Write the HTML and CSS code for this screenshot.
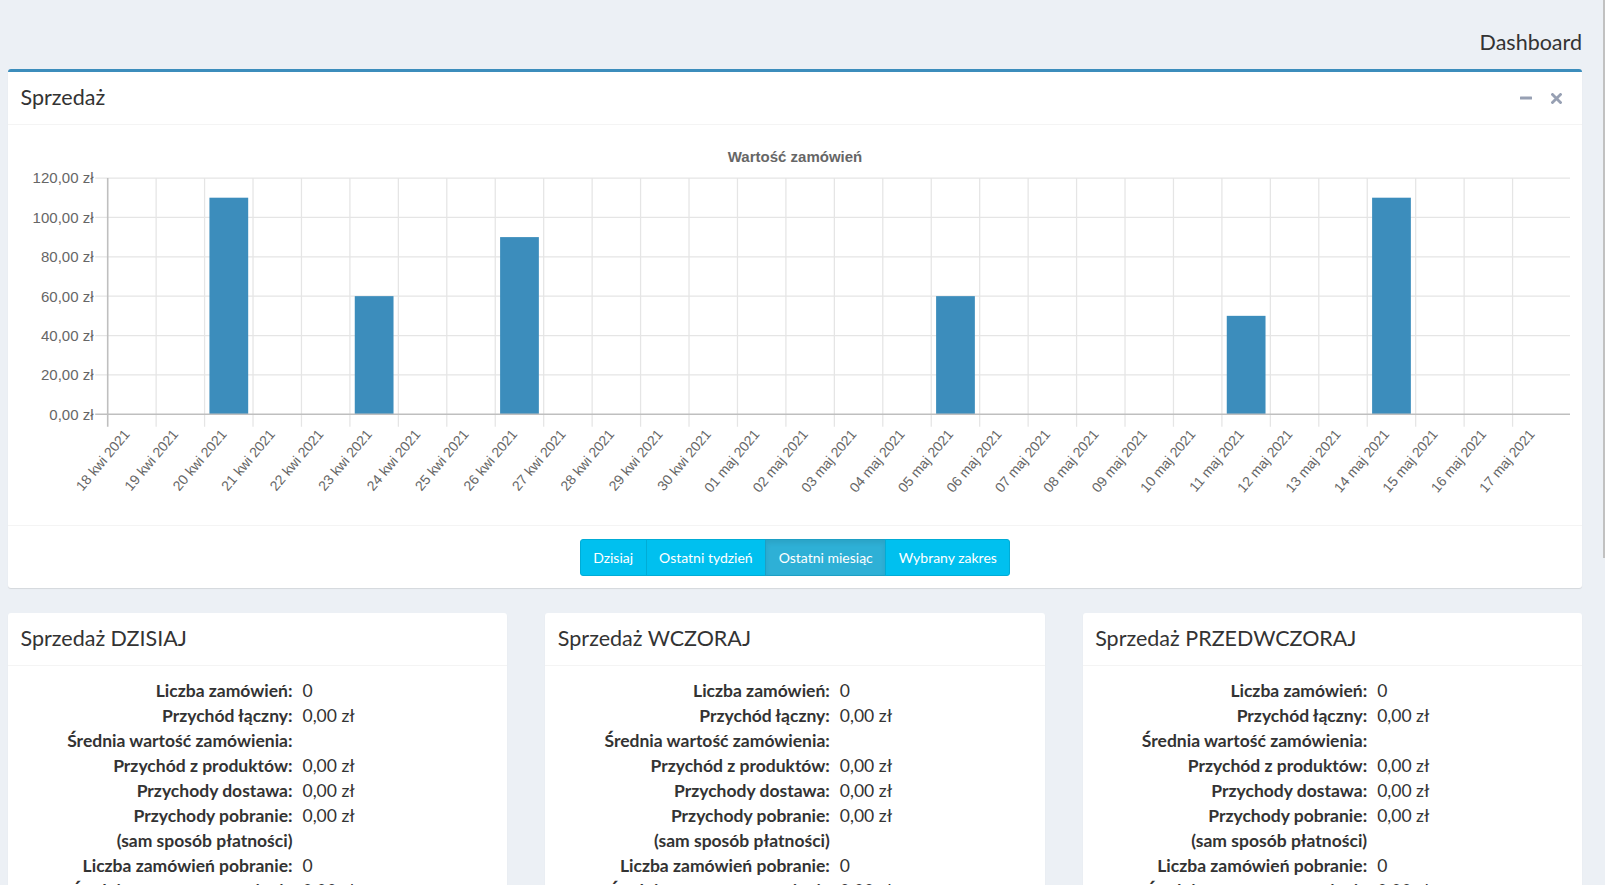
FILE: index.html
```html
<!DOCTYPE html>
<html lang="pl">
<head>
<meta charset="utf-8">
<title>Dashboard</title>
<link rel="stylesheet" href="styles.css">
</head>
<body>
<div class="page">
  <header class="content-header">
    <h1>Dashboard</h1>
  </header>

  <section class="box box-primary">
    <div class="box-header">
      <h3 class="box-title">Sprzedaż</h3>
      <div class="box-tools">
        <span class="tool tool-min"><svg width="12" height="12" viewBox="0 0 12 12"><rect x="0" y="4.5" width="12" height="3" rx="0.5" fill="#97a0b3"/></svg></span>
        <span class="tool tool-close"><svg width="11" height="11" viewBox="0 0 11 11"><path d="M1.5 1.5 L9.5 9.5 M9.5 1.5 L1.5 9.5" stroke="#97a0b3" stroke-width="2.8" stroke-linecap="square"/></svg></span>
      </div>
    </div>
    <div class="box-body">
      <svg class="chart" width="1574" height="400" viewBox="8 125 1574 400">
        <text class="chart-title" x="795" y="162" text-anchor="middle">Wartość zamówień</text>
        <g class="grid">
          <path d="M95.2 178H1570 M95.2 217.4H1570 M95.2 256.8H1570 M95.2 296.2H1570 M95.2 335.5H1570 M95.2 374.9H1570"/>
          <path d="M156.14 178V426.8 M204.59 178V426.8 M253.03 178V426.8 M301.48 178V426.8 M349.92 178V426.8 M398.37 178V426.8 M446.81 178V426.8 M495.26 178V426.8 M543.7 178V426.8 M592.14 178V426.8 M640.59 178V426.8 M689.03 178V426.8 M737.48 178V426.8 M785.92 178V426.8 M834.37 178V426.8 M882.81 178V426.8 M931.26 178V426.8 M979.7 178V426.8 M1028.14 178V426.8 M1076.59 178V426.8 M1125.03 178V426.8 M1173.48 178V426.8 M1221.92 178V426.8 M1270.37 178V426.8 M1318.81 178V426.8 M1367.26 178V426.8 M1415.7 178V426.8 M1464.14 178V426.8 M1512.59 178V426.8"/>
        </g>
        <g class="bars">
          <rect x="209.43" y="197.7" width="38.76" height="216.6"/>
          <rect x="354.76" y="296.15" width="38.76" height="118.15"/>
          <rect x="500.1" y="237.1" width="38.76" height="177.2"/>
          <rect x="936.1" y="296.15" width="38.76" height="118.15"/>
          <rect x="1226.76" y="315.84" width="38.76" height="98.46"/>
          <rect x="1372.1" y="197.7" width="38.76" height="216.6"/>
        </g>
        <path class="zero" d="M95.2 414.3H1570 M107.7 178V426.8"/>
        <g class="ylabels" text-anchor="end">
          <text x="93.5" y="183.3">120,00 zł</text>
          <text x="93.5" y="222.7">100,00 zł</text>
          <text x="93.5" y="262.1">80,00 zł</text>
          <text x="93.5" y="301.5">60,00 zł</text>
          <text x="93.5" y="340.8">40,00 zł</text>
          <text x="93.5" y="380.2">20,00 zł</text>
          <text x="93.5" y="419.6">0,00 zł</text>
        </g>
        <g class="xlabels" text-anchor="end">
          <text transform="translate(130.5 434.5) rotate(-50)">18 kwi 2021</text>
          <text transform="translate(178.94 434.5) rotate(-50)">19 kwi 2021</text>
          <text transform="translate(227.39 434.5) rotate(-50)">20 kwi 2021</text>
          <text transform="translate(275.83 434.5) rotate(-50)">21 kwi 2021</text>
          <text transform="translate(324.28 434.5) rotate(-50)">22 kwi 2021</text>
          <text transform="translate(372.72 434.5) rotate(-50)">23 kwi 2021</text>
          <text transform="translate(421.17 434.5) rotate(-50)">24 kwi 2021</text>
          <text transform="translate(469.61 434.5) rotate(-50)">25 kwi 2021</text>
          <text transform="translate(518.06 434.5) rotate(-50)">26 kwi 2021</text>
          <text transform="translate(566.5 434.5) rotate(-50)">27 kwi 2021</text>
          <text transform="translate(614.94 434.5) rotate(-50)">28 kwi 2021</text>
          <text transform="translate(663.39 434.5) rotate(-50)">29 kwi 2021</text>
          <text transform="translate(711.83 434.5) rotate(-50)">30 kwi 2021</text>
          <text transform="translate(760.28 434.5) rotate(-50)">01 maj 2021</text>
          <text transform="translate(808.72 434.5) rotate(-50)">02 maj 2021</text>
          <text transform="translate(857.17 434.5) rotate(-50)">03 maj 2021</text>
          <text transform="translate(905.61 434.5) rotate(-50)">04 maj 2021</text>
          <text transform="translate(954.06 434.5) rotate(-50)">05 maj 2021</text>
          <text transform="translate(1002.5 434.5) rotate(-50)">06 maj 2021</text>
          <text transform="translate(1050.94 434.5) rotate(-50)">07 maj 2021</text>
          <text transform="translate(1099.39 434.5) rotate(-50)">08 maj 2021</text>
          <text transform="translate(1147.83 434.5) rotate(-50)">09 maj 2021</text>
          <text transform="translate(1196.28 434.5) rotate(-50)">10 maj 2021</text>
          <text transform="translate(1244.72 434.5) rotate(-50)">11 maj 2021</text>
          <text transform="translate(1293.17 434.5) rotate(-50)">12 maj 2021</text>
          <text transform="translate(1341.61 434.5) rotate(-50)">13 maj 2021</text>
          <text transform="translate(1390.06 434.5) rotate(-50)">14 maj 2021</text>
          <text transform="translate(1438.5 434.5) rotate(-50)">15 maj 2021</text>
          <text transform="translate(1486.94 434.5) rotate(-50)">16 maj 2021</text>
          <text transform="translate(1535.39 434.5) rotate(-50)">17 maj 2021</text>
        </g>
      </svg>
    </div>
    <div class="box-footer">
      <div class="btn-group">
        <button class="btn">Dzisiaj</button>
        <button class="btn">Ostatni tydzień</button>
        <button class="btn active">Ostatni miesiąc</button>
        <button class="btn">Wybrany zakres</button>
      </div>
    </div>
  </section>

  <div class="cards">
    <section class="card">
      <div class="card-header"><h3 class="box-title">Sprzedaż DZISIAJ</h3></div>
      <dl class="stats">
        <dt>Liczba zamówień:</dt><dd>0</dd>
        <dt>Przychód łączny:</dt><dd>0,00 zł</dd>
        <dt>Średnia wartość zamówienia:</dt><dd></dd>
        <dt>Przychód z produktów:</dt><dd>0,00 zł</dd>
        <dt>Przychody dostawa:</dt><dd>0,00 zł</dd>
        <dt>Przychody pobranie:<br>(sam sposób płatności)</dt><dd>0,00 zł</dd>
        <dt>Liczba zamówień pobranie:</dt><dd>0</dd>
        <dt>Średnia wartość zamówienia pobranie:</dt><dd>0,00 zł</dd>
      </dl>
    </section>
    <section class="card">
      <div class="card-header"><h3 class="box-title">Sprzedaż WCZORAJ</h3></div>
      <dl class="stats">
        <dt>Liczba zamówień:</dt><dd>0</dd>
        <dt>Przychód łączny:</dt><dd>0,00 zł</dd>
        <dt>Średnia wartość zamówienia:</dt><dd></dd>
        <dt>Przychód z produktów:</dt><dd>0,00 zł</dd>
        <dt>Przychody dostawa:</dt><dd>0,00 zł</dd>
        <dt>Przychody pobranie:<br>(sam sposób płatności)</dt><dd>0,00 zł</dd>
        <dt>Liczba zamówień pobranie:</dt><dd>0</dd>
        <dt>Średnia wartość zamówienia pobranie:</dt><dd>0,00 zł</dd>
      </dl>
    </section>
    <section class="card">
      <div class="card-header"><h3 class="box-title">Sprzedaż PRZEDWCZORAJ</h3></div>
      <dl class="stats">
        <dt>Liczba zamówień:</dt><dd>0</dd>
        <dt>Przychód łączny:</dt><dd>0,00 zł</dd>
        <dt>Średnia wartość zamówienia:</dt><dd></dd>
        <dt>Przychód z produktów:</dt><dd>0,00 zł</dd>
        <dt>Przychody dostawa:</dt><dd>0,00 zł</dd>
        <dt>Przychody pobranie:<br>(sam sposób płatności)</dt><dd>0,00 zł</dd>
        <dt>Liczba zamówień pobranie:</dt><dd>0</dd>
        <dt>Średnia wartość zamówienia pobranie:</dt><dd>0,00 zł</dd>
      </dl>
    </section>
  </div>
</div>
<div class="scroll-thumb"></div>
</body>
</html>
```

FILE: styles.css
```css
html, body {
  margin: 0;
  height: 885px;
  overflow: hidden;
  background: #ecf0f5;
}

body {
  font-family: Lato, "Open Sans", "Liberation Sans", sans-serif;
  color: #333;
  font-size: 17.5px;
}

.page {
  padding: 0 23px 0 8px;
}

.content-header {
  height: 69px;
  box-sizing: border-box;
  padding-top: 30px;
  display: flex;
  justify-content: flex-end;
}

.content-header h1 {
  margin: 0;
  font-size: 21.5px;
  font-weight: 400;
  line-height: 25px;
}

.box {
  background: #fff;
  border-top: 3px solid #3c8dbc;
  border-radius: 3px;
  box-shadow: 0 1px 1px rgba(0, 0, 0, 0.1);
}

.box-header {
  height: 52px;
  border-bottom: 1px solid #f4f4f4;
  display: flex;
  align-items: center;
  justify-content: space-between;
  padding: 0 20px 0 12.5px;
}

.box-title {
  margin: 0;
  font-size: 21.5px;
  font-weight: 400;
  line-height: 1;
}

.box-tools {
  display: flex;
  align-items: center;
  gap: 19px;
}

.tool {
  display: flex;
  align-items: center;
}

.box-body {
  height: 400px;
}

.chart {
  display: block;
  font-family: "Liberation Sans", Arial, sans-serif;
  font-size: 15px;
}

.chart-title {
  font-weight: 700;
  fill: #666;
}

.grid path {
  fill: none;
  stroke: #e5e5e5;
  stroke-width: 1.25;
}

.zero {
  fill: none;
  stroke: #bfbfbf;
  stroke-width: 1.6;
}

.bars rect {
  fill: #3c8dbc;
}

.ylabels text,
.xlabels text {
  fill: #666;
}

.xlabels text {
  font-size: 14px;
}

.box-footer {
  border-top: 1px solid #f4f4f4;
  padding: 13px 0 12px;
  display: flex;
  justify-content: center;
}

.btn-group {
  display: flex;
}

.btn {
  height: 37px;
  padding: 0 12.5px;
  margin: 0;
  border: 1px solid #00acd6;
  background: #00c0ef;
  color: #fff;
  font-family: inherit;
  font-size: 14px;
  line-height: 35px;
}

.btn + .btn {
  margin-left: -1px;
}

.btn:first-child {
  border-radius: 3px 0 0 3px;
}

.btn:last-child {
  border-radius: 0 3px 3px 0;
}

.btn.active {
  background: #2eb0d6;
  border-color: #1d9fc4;
  box-shadow: inset 0 3px 5px rgba(0, 0, 0, 0.08);
}

.cards {
  margin-top: 25px;
  display: grid;
  grid-template-columns: repeat(3, 1fr);
  column-gap: 38px;
}

.card {
  background: #fff;
  border-radius: 3px;
  box-shadow: 0 1px 1px rgba(0, 0, 0, 0.1);
}

.card-header {
  height: 52px;
  border-bottom: 1px solid #f4f4f4;
  display: flex;
  align-items: center;
  padding: 0 12.5px;
}

.stats {
  margin: 0;
  padding: 12px 12.5px;
  display: grid;
  grid-template-columns: 272px 1fr;
  column-gap: 10px;
  line-height: 25px;
}

.stats dt {
  font-weight: 700;
  text-align: right;
}

.stats dd {
  margin: 0;
}

.scroll-thumb {
  position: fixed;
  top: 0;
  right: 0;
  width: 2.5px;
  height: 558px;
  background: #c1c1c1;
}
```
